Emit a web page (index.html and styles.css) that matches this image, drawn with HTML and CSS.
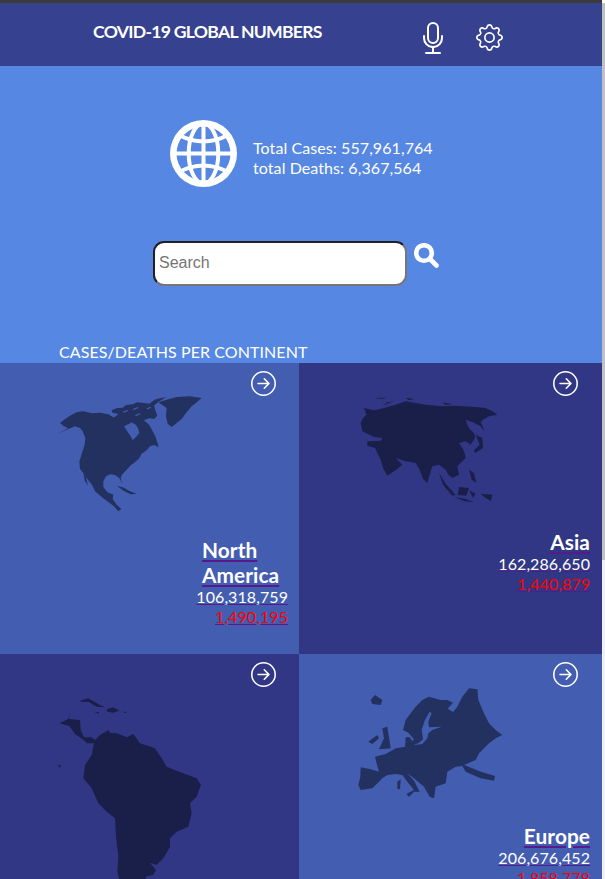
FILE: index.html
```html
<!DOCTYPE html>
<html lang="en">
<head>
<meta charset="utf-8">
<title>COVID-19 Global Numbers</title>
<link rel="stylesheet" href="styles.css">
</head>
<body>
<div class="page">
  <div class="topline"></div>
  <header class="header">
    <h1 class="title">COVID-19 GLOBAL NUMBERS</h1>
    <svg class="mic" viewBox="0 0 16 16" fill="currentColor"><path d="M3.5 6.5A.5.5 0 0 1 4 7v1a4 4 0 0 0 8 0V7a.5.5 0 0 1 1 0v1a5 5 0 0 1-4.5 4.975V15h3a.5.5 0 0 1 0 1h-7a.5.5 0 0 1 0-1h3v-2.025A5 5 0 0 1 3 8V7a.5.5 0 0 1 .5-.5"/><path d="M10 8a2 2 0 1 1-4 0V3a2 2 0 1 1 4 0zM8 0a3 3 0 0 0-3 3v5a3 3 0 0 0 6 0V3a3 3 0 0 0-3-3"/></svg>
    <svg class="gear" viewBox="0 0 16 16" fill="currentColor"><path d="M8 4.754a3.246 3.246 0 1 0 0 6.492 3.246 3.246 0 0 0 0-6.492M5.754 8a2.246 2.246 0 1 1 4.492 0 2.246 2.246 0 0 1-4.492 0"/><path d="M9.796 1.343c-.527-1.79-3.065-1.79-3.592 0l-.094.319a.873.873 0 0 1-1.255.52l-.292-.16c-1.64-.892-3.433.902-2.54 2.541l.159.292a.873.873 0 0 1-.52 1.255l-.319.094c-1.79.527-1.79 3.065 0 3.592l.319.094a.873.873 0 0 1 .52 1.255l-.16.292c-.892 1.64.901 3.434 2.541 2.54l.292-.159a.873.873 0 0 1 1.255.52l.094.319c.527 1.79 3.065 1.79 3.592 0l.094-.319a.873.873 0 0 1 1.255-.52l.292.16c1.64.893 3.434-.902 2.54-2.541l-.159-.292a.873.873 0 0 1 .52-1.255l.319-.094c1.79-.527 1.79-3.065 0-3.592l-.319-.094a.873.873 0 0 1-.52-1.255l.16-.292c.893-1.64-.902-3.433-2.541-2.54l-.292.159a.873.873 0 0 1-1.255-.52zm-2.633.283c.246-.835 1.428-.835 1.674 0l.094.319a1.873 1.873 0 0 0 2.693 1.115l.291-.16c.764-.415 1.6.42 1.184 1.185l-.159.292a1.873 1.873 0 0 0 1.116 2.692l.318.094c.835.246.835 1.428 0 1.674l-.319.094a1.873 1.873 0 0 0-1.115 2.693l.16.291c.415.764-.42 1.6-1.185 1.184l-.291-.159a1.873 1.873 0 0 0-2.693 1.116l-.094.318c-.246.835-1.428.835-1.674 0l-.094-.319a1.873 1.873 0 0 0-2.692-1.115l-.292.16c-.764.415-1.6-.42-1.184-1.185l.159-.291A1.873 1.873 0 0 0 1.945 8.93l-.319-.094c-.835-.246-.835-1.428 0-1.674l.319-.094A1.873 1.873 0 0 0 3.06 4.377l-.16-.292c-.415-.764.42-1.6 1.185-1.184l.292.159a1.873 1.873 0 0 0 2.692-1.115z"/></svg>
  </header>

  <section class="hero">
    <div class="totals">
      <svg class="globe" viewBox="0 0 67 67">
        <circle class="globe-disc" cx="33.5" cy="33.5" r="33.5"/>
        <circle class="globe-sea" cx="33.5" cy="33.5" r="27"/>
        <g class="globe-lines">
          <path d="M33.5 3V64M3 33.5H64"/>
          <ellipse cx="33.5" cy="33.5" rx="14.8" ry="30"/>
          <path d="M9 15Q33.5 28 58 15M9 52Q33.5 39 58 52"/>
        </g>
      </svg>
      <div class="totals-text">
        <div>Total Cases: 557,961,764</div>
        <div>total Deaths: 6,367,564</div>
      </div>
    </div>
    <form class="search">
      <input class="search-input" type="text" placeholder="Search">
      <svg class="search-icon" viewBox="0 0 25 25"><circle cx="10" cy="10" r="7.8"/><path d="M16 16L22.5 22.5"/></svg>
    </form>
    <h2 class="section-title">CASES/DEATHS PER CONTINENT</h2>
  </section>

  <section class="grid">
    <article class="card card-light">
      <svg class="map" viewBox="0 0 897 873"><g class="land-light">
        <path d="M172 212L188 204L205 196L192 190L180 180L192 170L215 155L232 147L250 145L275 151L300 149L325 154L340 163L358 158L375 166L395 160L415 166L432 172L448 186L458 205L466 220L472 238L476 252L462 246L450 250L440 262L425 272L418 285L405 298L392 307L380 320L366 335L362 345L367 362L358 345L345 336L330 334L318 340L310 355L310 372L322 388L340 395L338 408L350 425L364 438L355 445L342 430L322 415L305 402L285 385L276 365L262 348L250 330L240 318L238 296L246 270L254 245L256 225L248 205L240 195L225 190L205 198Z"/>
        <path d="M475 118L500 110L530 102L570 100L605 105L590 118L575 130L558 150L545 168L530 180L515 192L503 182L498 160L500 135Z"/>
        <path d="M335 142L352 135L368 134L378 126L398 124L412 118L432 120L448 122L462 112L470 108L500 102L475 116L462 128L466 142L472 158L462 168L448 166L430 172L395 170L370 172L345 162L355 152L338 150Z"/>
        <path d="M250 330L258 342L264 368L254 352Z"/>
        <path d="M350 368L372 374L388 384L410 392L392 394L372 384Z"/>
        <path class="land-hole" d="M372 190L385 184L395 178L408 186L414 195L418 210L408 222L398 232L392 220L385 210Z"/>
        <path class="land-hole" d="M368 146L382 141L384 144L371 149ZM398 138L414 132L416 135L401 141ZM405 156L420 151L422 154L408 159ZM440 136L452 131L453 135L442 139Z"/>
      </g></svg>
      <a class="arrow" href="#"><svg viewBox="0 0 16 16" fill="currentColor"><path d="M1 8a7 7 0 1 0 14 0A7 7 0 0 0 1 8m15 0A8 8 0 1 1 0 8a8 8 0 0 1 16 0M4.5 7.5a.5.5 0 0 0 0 1h5.793l-2.147 2.146a.5.5 0 0 0 .708.708l3-3a.5.5 0 0 0 0-.708l-3-3a.5.5 0 1 0-.708.708L10.293 7.5z"/></svg></a>
      <a class="stats stats-na" href="#">
        <div class="name name-narrow"><span>North America</span></div>
        <div class="num"><span>106,318,759</span></div>
        <div class="num"><span class="deaths">1,490,195</span></div>
      </a>
    </article>

    <article class="card card-dark">
      <svg class="map" viewBox="0 0 909 873"><g class="land-dark">
        <path d="M185 180L192 165L202 155L195 135L225 142L255 135L290 125L320 115L350 120L380 125L430 130L465 128L490 130L530 132L560 135L580 145L595 155L570 160L552 170L545 178L552 192L556 205L545 190L522 178L500 170L505 185L510 195L526 212L528 225L515 245L500 235L480 240L490 255L497 270L500 285L485 300L475 310L480 335L460 345L448 335L440 320L420 305L400 310L392 335L385 360L372 348L362 320L350 300L320 295L290 285L310 305L290 322L265 338L252 315L245 290L228 255L205 248L205 235L245 233L250 225L225 222L190 205Z"/>
        <path d="M225 105L262 104L250 108Z"/>
        <path d="M250 130L265 118L285 115L265 122Z"/>
        <path d="M320 104L345 108L330 112Z"/>
        <path d="M430 118L460 124L440 126Z"/>
        <path d="M530 215L550 225L552 255L528 270L525 262L542 245Z"/>
        <path d="M420 330L440 362L470 396L460 398L432 365Z"/>
        <path d="M480 372L510 375L502 398L476 396Z"/>
        <path d="M465 402L500 408L525 418L495 414Z"/>
        <path d="M510 320L525 330L532 360L518 350Z"/>
        <path d="M545 392L580 395L576 414L560 405Z"/>
        <path d="M510 382L530 392L522 405Z"/>
      </g></svg>
      <a class="arrow" href="#"><svg viewBox="0 0 16 16" fill="currentColor"><path d="M1 8a7 7 0 1 0 14 0A7 7 0 0 0 1 8m15 0A8 8 0 1 1 0 8a8 8 0 0 1 16 0M4.5 7.5a.5.5 0 0 0 0 1h5.793l-2.147 2.146a.5.5 0 0 0 .708.708l3-3a.5.5 0 0 0 0-.708l-3-3a.5.5 0 1 0-.708.708L10.293 7.5z"/></svg></a>
      <a class="stats stats-asia" href="#">
        <div class="name"><span>Asia</span></div>
        <div class="num"><span>162,286,650</span></div>
        <div class="num"><span class="deaths">1,440,879</span></div>
      </a>
    </article>

    <article class="card card-dark">
      <svg class="map" viewBox="0 12 897 873"><g class="land-dark">
        <path d="M178 220L205 207L210 182L207 207L240 210L242 240L252 262L275 262L285 270L300 255L325 240L330 248L350 250L380 262L400 252L420 280L465 295L485 325L500 350L545 368L590 385L603 405L590 440L570 460L575 490L565 530L530 545L510 565L510 590L490 625L470 645L450 638L468 660L460 675L438 680L438 700L360 700L352 665L355 620L348 560L345 505L320 485L295 460L275 415L250 385L255 345L275 315L282 280L262 280L248 268L225 252L208 228Z"/>
        <path d="M240 152L265 145L300 165L315 172L290 170L265 155L245 156Z"/>
        <path d="M320 178L340 172L358 182L340 188L322 185Z"/>
        <path d="M283 186L298 187L296 191Z"/>
        <path d="M365 185L380 186L378 189Z"/>
        <path d="M172 346L184 346L180 352Z"/>
      </g></svg>
      <a class="arrow" href="#"><svg viewBox="0 0 16 16" fill="currentColor"><path d="M1 8a7 7 0 1 0 14 0A7 7 0 0 0 1 8m15 0A8 8 0 1 1 0 8a8 8 0 0 1 16 0M4.5 7.5a.5.5 0 0 0 0 1h5.793l-2.147 2.146a.5.5 0 0 0 .708.708l3-3a.5.5 0 0 0 0-.708l-3-3a.5.5 0 1 0-.708.708L10.293 7.5z"/></svg></a>
    </article>

    <article class="card card-light">
      <svg class="map" viewBox="0 12 909 873"><g class="land-light">
        <path d="M178 405L184 380L185 352L215 358L240 365L234 345L228 320L260 312L290 295L318 290L320 262L332 262L340 274L345 268L328 248L312 240L320 210L335 190L350 170L370 150L390 140L425 150L445 150L462 158L446 176L462 186L474 172L490 140L510 115L535 118L538 150L555 190L570 220L590 240L610 255L590 265L570 280L555 295L540 310L530 330L495 345L520 355L545 365L588 378L585 392L545 385L500 365L490 348L470 350L445 365L440 400L410 410L405 445L392 440L375 410L345 385L325 370L345 392L362 425L345 425L330 440L322 432L345 420L325 395L310 375L290 372L265 375L250 385L240 395L220 415L185 420Z"/>
        <path class="land-hole" d="M342 286L360 278L372 268L368 240L378 210L392 185L398 190L388 215L390 232L428 230L400 240L388 250L385 265L370 282Z"/>
        <path d="M215 150L228 135L250 150L245 165L220 162Z"/>
        <path d="M240 298L255 265L250 235L265 230L275 295Z"/>
        <path d="M208 275L235 255L240 265L220 282Z"/>
        <path d="M295 395L305 388L303 418L295 416Z"/>
      </g></svg>
      <a class="arrow" href="#"><svg viewBox="0 0 16 16" fill="currentColor"><path d="M1 8a7 7 0 1 0 14 0A7 7 0 0 0 1 8m15 0A8 8 0 1 1 0 8a8 8 0 0 1 16 0M4.5 7.5a.5.5 0 0 0 0 1h5.793l-2.147 2.146a.5.5 0 0 0 .708.708l3-3a.5.5 0 0 0 0-.708l-3-3a.5.5 0 1 0-.708.708L10.293 7.5z"/></svg></a>
      <a class="stats stats-eu" href="#">
        <div class="name"><span>Europe</span></div>
        <div class="num"><span>206,676,452</span></div>
        <div class="num"><span class="deaths">1,858,778</span></div>
      </a>
    </article>
  </section>
</div>
<div class="scroll-track"><div class="scroll-thumb"></div></div>
</body>
</html>
```

FILE: styles.css
```css
html, body {
  margin: 0;
  height: 879px;
  overflow: hidden;
  background: #fff;
}
body {
  font-family: Lato, "Open Sans", sans-serif;
  font-size: 16px;
  letter-spacing: 0.08px;
  color: #fff;
}
.page {
  width: 602px;
  height: 879px;
  overflow: hidden;
}
.topline {
  height: 3px;
  background: #3b3b3b;
}
.header {
  display: flex;
  align-items: flex-start;
  height: 63px;
  box-sizing: border-box;
  padding: 19px 0 0 93px;
  background: #364190;
}
.title {
  width: 229px;
  margin: 0 95px 0 0;
  font-size: 17.6px;
  line-height: 19px;
  font-weight: 700;
  letter-spacing: -0.72px;
  white-space: nowrap;
}
.mic {
  width: 32px;
  height: 32px;
  color: #fff;
}
.gear {
  width: 27px;
  height: 27px;
  margin: 2px 0 0 27px;
  color: #fff;
}
.hero {
  background: #5688e3;
  padding-top: 54px;
}
.totals {
  display: flex;
  align-items: flex-start;
  gap: 16px;
  margin-left: 170px;
}
.globe {
  width: 67px;
  height: 67px;
  display: block;
}
.globe-disc { fill: #fff; }
.globe-sea { fill: #5688e3; }
.globe-lines {
  fill: none;
  stroke: #fff;
  stroke-width: 4;
}
.totals-text {
  margin-top: 18px;
  line-height: 20px;
}
.search {
  display: flex;
  align-items: flex-start;
  gap: 7px;
  margin: 54px 0 0 153px;
}
.search-input {
  width: 254px;
  height: 45px;
  box-sizing: border-box;
  padding: 0 4px 2px;
  border: 2px inset #767676;
  border-radius: 11px;
  background: #fff;
  font-family: "Liberation Sans", Arial, sans-serif;
  font-size: 16px;
}
.search-input::placeholder { color: #757575; }
.search-icon {
  width: 25px;
  height: 25px;
  margin-top: 2px;
  fill: none;
  stroke: #fff;
  stroke-width: 4.6;
  stroke-linecap: round;
}
.section-title {
  margin: 56px 0 0;
  padding: 0 0 1px 59px;
  font-size: 16px;
  line-height: 20px;
  font-weight: 400;
}
.grid {
  display: grid;
  grid-template-columns: 299px 303px;
  grid-auto-rows: 291px;
}
.card {
  position: relative;
  display: flex;
  flex-direction: column;
  overflow: hidden;
}
.card-light { background: #435db1; }
.card-dark { background: #313785; }
.map {
  position: absolute;
  inset: 0;
  width: 100%;
  height: 100%;
}
.land-light { fill: #22315f; }
.land-dark { fill: #1a1f4a; }
.land-hole { fill: #435db1; }
.arrow {
  position: relative;
  align-self: flex-end;
  width: 25px;
  height: 25px;
  margin: 8px 23px 0 0;
  color: #fff;
}
.arrow svg {
  display: block;
  width: 25px;
  height: 25px;
}
.card:nth-child(even) .arrow { margin-right: 24px; }
.stats {
  position: relative;
  align-self: flex-end;
  display: block;
  margin-right: 11px;
  text-align: right;
  color: #551a8b;
  text-decoration: underline;
}
.card:nth-child(even) .stats { margin-right: 12px; }
.stats-na { margin-top: 141px; }
.stats-asia { margin-top: 133px; }
.stats-eu { margin-top: 136px; }
.name {
  font-size: 20.8px;
  line-height: 25px;
  font-weight: 700;
}
.name-narrow {
  width: 86px;
  margin-left: auto;
  text-align: left;
}
.name span, .num span { color: #fff; }
.num {
  line-height: 20px;
}
.num .deaths { color: #f00; }
.scroll-track {
  position: fixed;
  top: 3px;
  right: 0;
  bottom: 0;
  width: 3px;
  background: #f1f1f1;
}
.scroll-thumb {
  height: 557px;
  background: #c1c1c1;
}
```
